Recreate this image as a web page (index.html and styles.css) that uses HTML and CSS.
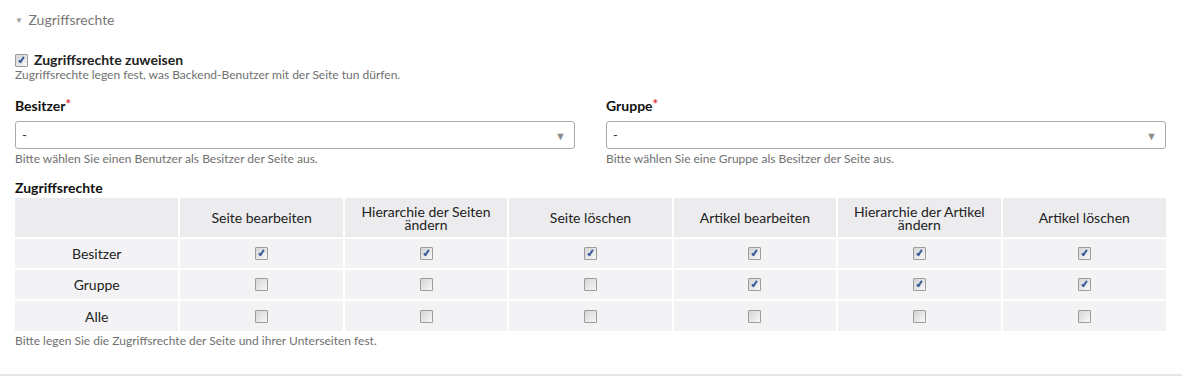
FILE: index.html
```html
<!DOCTYPE html>
<html lang="de">
<head>
  <meta charset="UTF-8" />
  <title>Zugriffsrechte</title>
  <link rel="stylesheet" href="styles.css">
</head>
<body>
  <fieldset class="panel">
    <div class="panel-title"><span class="caret">▼</span> Zugriffsrechte</div>

    <label class="check-row">
      <input type="checkbox" class="cb" checked>
      <span>Zugriffsrechte zuweisen</span>
    </label>
    <p class="help">Zugriffsrechte legen fest, was Backend-Benutzer mit der Seite tun dürfen.</p>

    <div class="field-row">
      <div class="field">
        <div class="field-label">Besitzer<span class="req">*</span></div>
        <div class="select"><span>-</span><span class="arrow">▼</span></div>
        <p class="help">Bitte wählen Sie einen Benutzer als Besitzer der Seite aus.</p>
      </div>
      <div class="field">
        <div class="field-label">Gruppe<span class="req">*</span></div>
        <div class="select"><span>-</span><span class="arrow">▼</span></div>
        <p class="help">Bitte wählen Sie eine Gruppe als Besitzer der Seite aus.</p>
      </div>
    </div>

    <div class="field-label perms-label">Zugriffsrechte</div>
    <table class="perms">
      <thead>
        <tr>
          <th></th>
          <th>Seite bearbeiten</th>
          <th>Hierarchie der Seiten ändern</th>
          <th>Seite löschen</th>
          <th>Artikel bearbeiten</th>
          <th>Hierarchie der Artikel ändern</th>
          <th>Artikel löschen</th>
        </tr>
      </thead>
      <tbody>
        <tr>
          <td>Besitzer</td>
          <td><input type="checkbox" class="cb" checked></td>
          <td><input type="checkbox" class="cb" checked></td>
          <td><input type="checkbox" class="cb" checked></td>
          <td><input type="checkbox" class="cb" checked></td>
          <td><input type="checkbox" class="cb" checked></td>
          <td><input type="checkbox" class="cb" checked></td>
        </tr>
        <tr>
          <td>Gruppe</td>
          <td><input type="checkbox" class="cb"></td>
          <td><input type="checkbox" class="cb"></td>
          <td><input type="checkbox" class="cb"></td>
          <td><input type="checkbox" class="cb" checked></td>
          <td><input type="checkbox" class="cb" checked></td>
          <td><input type="checkbox" class="cb" checked></td>
        </tr>
        <tr>
          <td>Alle</td>
          <td><input type="checkbox" class="cb"></td>
          <td><input type="checkbox" class="cb"></td>
          <td><input type="checkbox" class="cb"></td>
          <td><input type="checkbox" class="cb"></td>
          <td><input type="checkbox" class="cb"></td>
          <td><input type="checkbox" class="cb"></td>
        </tr>
      </tbody>
    </table>
    <p class="help help-table">Bitte legen Sie die Zugriffsrechte der Seite und ihrer Unterseiten fest.</p>
  </fieldset>
</body>
</html>
```

FILE: styles.css
```css
html, body {
  margin: 0;
  padding: 0;
  background: #fff;
  font-family: Lato, "Liberation Sans", sans-serif;
  color: #222;
}
*, *::before, *::after {
  box-sizing: border-box;
}

.panel {
  margin: 0;
  border: 0;
  border-bottom: 2px solid #e6e6e6;
  padding: 10px 16px 0 15px;
  height: 376px;
  min-width: 0;
}

.panel-title {
  line-height: 20px;
  font-size: 14px;
  color: #777;
}
.caret {
  display: inline-block;
  font-size: 8px;
  color: #999;
  vertical-align: 2px;
  margin-right: 2px;
}

.check-row {
  display: flex;
  align-items: center;
  gap: 6px;
  margin-top: 22px;
  line-height: 16px;
  font-size: 14px;
  font-weight: 700;
}

/* checkbox im alten Look */
.cb {
  appearance: none;
  -webkit-appearance: none;
  position: relative;
  width: 13px;
  height: 13px;
  margin: 0;
  border: 1px solid #9c9c9c;
  border-radius: 1px;
  background: linear-gradient(135deg, #d4d4d4, #f8f8f8);
  vertical-align: middle;
}
.cb:checked::after {
  content: "";
  position: absolute;
  left: 4px;
  top: 1px;
  width: 3px;
  height: 7px;
  border: solid #3d5c9c;
  border-width: 0 2px 2px 0;
  transform: rotate(35deg);
}

.help {
  margin: 0;
  font-size: 12px;
  line-height: 14px;
  color: #707070;
}

.field-row {
  display: grid;
  grid-template-columns: 1fr 1fr;
  column-gap: 31px;
}

.field-label {
  margin-top: 13px;
  font-size: 14px;
  font-weight: 700;
  line-height: 18px;
  color: #111;
}
.req {
  color: #e0313a;
  font-size: 13px;
  vertical-align: 2px;
}

.select {
  display: flex;
  justify-content: space-between;
  align-items: center;
  height: 28px;
  margin-top: 6px;
  padding: 0 8px 0 6px;
  border: 1px solid #aaa;
  border-radius: 3px;
  font-size: 13px;
  color: #333;
}
.select .arrow {
  font-size: 11px;
  color: #8a8a8a;
}
.field .help {
  margin-top: 3px;
}

.perms-label {
  margin-top: 13px;
}

.perms {
  width: 100%;
  margin-top: 1px;
  border-collapse: collapse;
  table-layout: fixed;
  font-size: 14px;
}
.perms th,
.perms td {
  text-align: center;
  border-right: 2px solid #fff;
  border-bottom: 2px solid #fff;
  padding: 0 4px;
}
.perms th:last-child,
.perms td:last-child {
  border-right: 0;
}
.perms tbody tr:last-child td {
  border-bottom: 0;
}
.perms th {
  height: 40px;
  background: #ececee;
  font-weight: 400;
  line-height: 13px;
  color: #222;
}
.perms td {
  height: 31px;
  background: #f3f3f5;
}
.perms td .cb {
  vertical-align: -1px;
}

.help-table {
  margin-top: 3px;
}
```
